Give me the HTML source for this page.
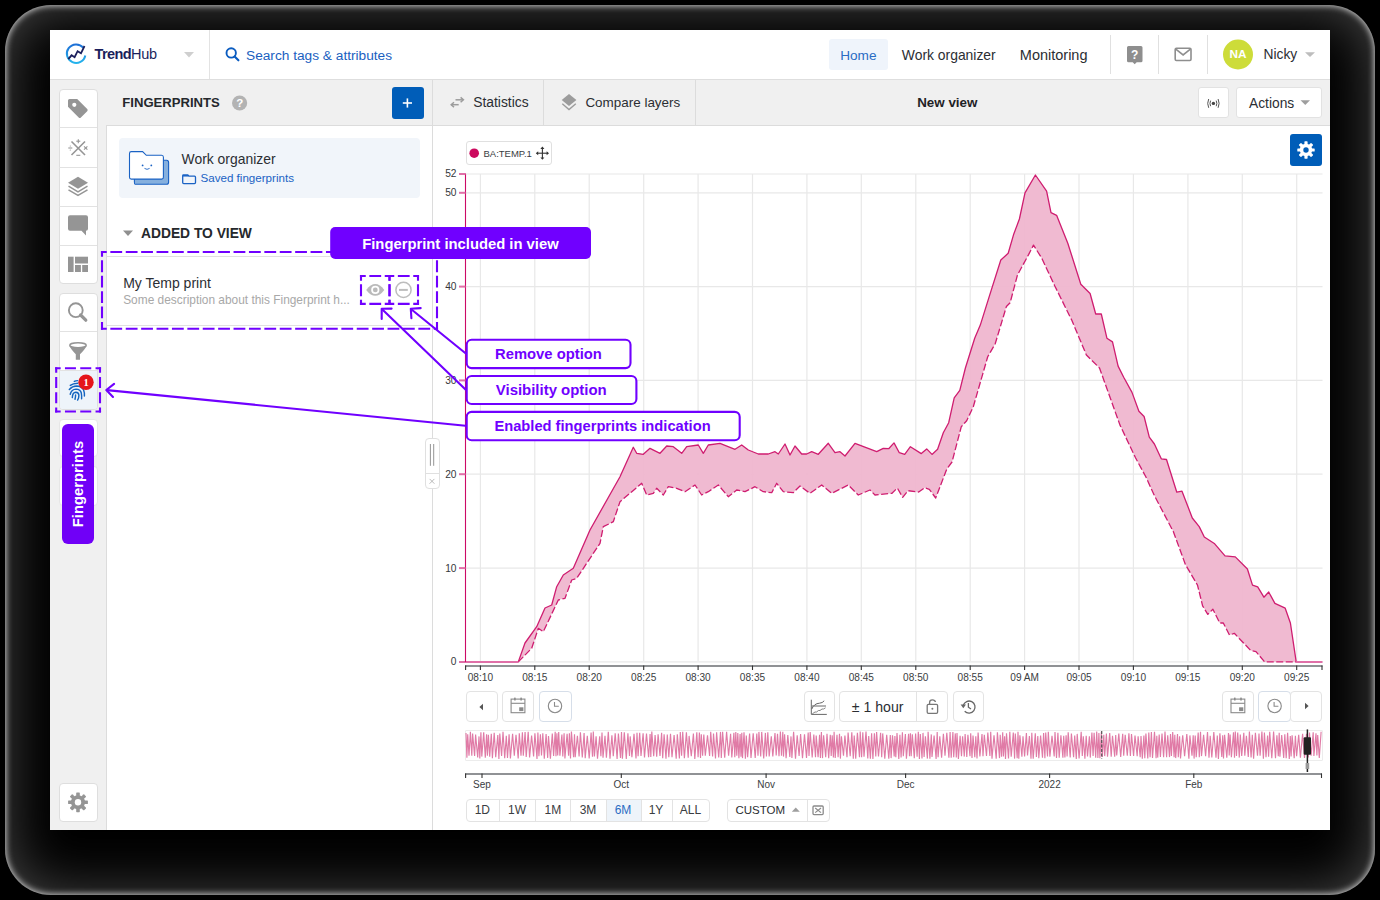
<!DOCTYPE html><html><head><meta charset="utf-8"><style>
*{margin:0;padding:0;box-sizing:border-box}
html,body{width:1380px;height:900px;overflow:hidden;background:#000}
body{position:relative;font-family:"Liberation Sans",sans-serif}
.t{position:absolute;white-space:nowrap}
.r{position:absolute}
svg.ov{position:absolute;left:0;top:0;width:1380px;height:900px;overflow:visible}
</style></head><body>
<div class="r" style="left:5px;top:5px;width:1370px;height:890px;border-radius:46px;background:#000;box-shadow:inset 0 0 6px 1px rgba(255,255,255,0.75),inset 0 0 60px 0 rgba(255,255,255,0.3)"></div>
<div class="r" style="left:50px;top:30px;width:1280px;height:800px;background:#fff"></div>
<div class="r" style="left:50px;top:79px;width:1280px;height:1px;background:#dedede"></div>
<div class="r" style="left:209px;top:30px;width:1px;height:49px;background:#e3e3e3"></div>
<svg class="ov" viewBox="0 0 1380 900">
<defs><linearGradient id="lg" x1="0" y1="0" x2="0" y2="1"><stop offset="0" stop-color="#1d6fd6"/><stop offset="1" stop-color="#25b4ec"/></linearGradient></defs>
<path d="M83.2 47.6 A9.3 9.3 0 1 0 85.3 55.5" fill="none" stroke="url(#lg)" stroke-width="2"/>
<polyline points="68.3,59.2 71.6,55.3 74.6,57.2 77.6,51.2 81,53.3 84.5,46" fill="none" stroke="#1b1f5c" stroke-width="1.8" stroke-linejoin="miter"/>
</svg>
<div class="t" style="left:94.50px;top:47.33px;font-size:14.5px;line-height:14.5px;color:#1b1f5c;font-weight:normal;"><span style="font-weight:bold;letter-spacing:-0.6px">Trend</span><span style="letter-spacing:-0.3px">Hub</span></div>
<svg class="ov" viewBox="0 0 1380 900"><path d="M184 52 L194 52 L189 57.5Z" fill="#cfcfcf"/></svg>
<svg class="ov" viewBox="0 0 1380 900"><circle cx="231.2" cy="52.9" r="4.7" fill="none" stroke="#0b5cc0" stroke-width="1.9"/><line x1="234.6" y1="56.4" x2="238.4" y2="60.3" stroke="#0b5cc0" stroke-width="2.1" stroke-linecap="round"/></svg>
<div class="t" style="left:246.00px;top:49.10px;font-size:13.7px;line-height:13.7px;color:#1a5fbf;font-weight:normal;">Search tags &amp; attributes</div>
<div class="r" style="left:829px;top:39px;width:59px;height:31px;background:#eff4fb;border-radius:3px"></div>
<div class="t" style="left:840.20px;top:48.99px;font-size:13.6px;line-height:13.6px;color:#2a6cc4;font-weight:normal;">Home</div>
<div class="t" style="left:901.80px;top:48.73px;font-size:13.9px;line-height:13.9px;color:#2b2e33;font-weight:normal;">Work organizer</div>
<div class="t" style="left:1019.80px;top:48.23px;font-size:14.5px;line-height:14.5px;color:#2b2e33;font-weight:normal;">Monitoring</div>
<div class="r" style="left:1110px;top:35px;width:1px;height:39px;background:#e0e0e0"></div>
<div class="r" style="left:1158px;top:35px;width:1px;height:39px;background:#e0e0e0"></div>
<div class="r" style="left:1207px;top:35px;width:1px;height:39px;background:#e0e0e0"></div>
<svg class="ov" viewBox="0 0 1380 900">
<path d="M1128.5 46 h12.5 a1.5 1.5 0 0 1 1.5 1.5 v13.3 a1.5 1.5 0 0 1 -1.5 1.5 h-4.3 l-2 2 l-2 -2 h-4.2 a1.5 1.5 0 0 1 -1.5 -1.5 v-13.3 a1.5 1.5 0 0 1 1.5 -1.5z" fill="#8e8e8e"/>
<text x="1134.7" y="59.3" font-family="Liberation Sans" font-weight="bold" font-size="12" fill="#fff" text-anchor="middle">?</text>
<rect x="1175.2" y="48.3" width="15.8" height="12.2" rx="1.2" fill="none" stroke="#8e8e8e" stroke-width="1.6"/>
<polyline points="1175.8,49.2 1183.1,55 1190.4,49.2" fill="none" stroke="#8e8e8e" stroke-width="1.6"/>
<circle cx="1238" cy="54.5" r="15" fill="#cddc39"/>
</svg>
<div class="t" style="left:1038.00px;width:400px;text-align:center;top:48.71px;font-size:11.8px;line-height:11.8px;color:#fff;font-weight:bold;">NA</div>
<div class="t" style="left:1263.50px;top:47.82px;font-size:13.8px;line-height:13.8px;color:#2b2e33;font-weight:normal;">Nicky</div>
<svg class="ov" viewBox="0 0 1380 900"><path d="M1305 52.3 L1315 52.3 L1310 57Z" fill="#bdbdbd"/></svg>
<div class="r" style="left:50px;top:80px;width:1280px;height:750px;background:#f0f0f0"></div>
<div class="r" style="left:106px;top:125px;width:1px;height:705px;background:#dcdcdc"></div>
<div class="r" style="left:107px;top:126px;width:325px;height:704px;background:#fff"></div>
<div class="r" style="left:107px;top:125px;width:325px;height:1px;background:#dcdcdc"></div>
<div class="r" style="left:432px;top:80px;width:1px;height:750px;background:#dcdcdc"></div>
<div class="r" style="left:433px;top:126px;width:897px;height:704px;background:#fff"></div>
<div class="r" style="left:433px;top:125px;width:897px;height:1px;background:#dcdcdc"></div>
<div class="r" style="left:58.5px;top:88.5px;width:39px;height:195px;background:#fff;border:1px solid #dedede;border-radius:4px"></div>
<div class="r" style="left:59px;top:127px;width:38px;height:1px;background:#e2e2e2"></div>
<div class="r" style="left:59px;top:166.5px;width:38px;height:1px;background:#e2e2e2"></div>
<div class="r" style="left:59px;top:205.5px;width:38px;height:1px;background:#e2e2e2"></div>
<div class="r" style="left:59px;top:244.5px;width:38px;height:1px;background:#e2e2e2"></div>
<div class="r" style="left:58.5px;top:292.5px;width:39px;height:117px;background:#fff;border:1px solid #dedede;border-radius:4px"></div>
<div class="r" style="left:59px;top:331px;width:38px;height:1px;background:#e2e2e2"></div>
<div class="r" style="left:59px;top:369.5px;width:38px;height:1px;background:#e2e2e2"></div>
<div class="r" style="left:59.5px;top:370.5px;width:37px;height:38px;background:#eef4fa;border-radius:0 0 3px 3px"></div>
<div class="r" style="left:58.5px;top:418.5px;width:39px;height:38px;background:#fff;border:1px solid #e6e6e6;border-radius:4px"></div>
<div class="r" style="left:58.5px;top:466px;width:39px;height:40px;background:#fff;border:1px solid #e6e6e6;border-radius:4px"></div>
<div class="r" style="left:58.5px;top:782.5px;width:39px;height:39px;background:#fff;border:1px solid #dedede;border-radius:4px"></div>
<svg class="ov" viewBox="0 0 1380 900">
<path d="M68 100.5 Q68 99 69.5 99 L77.2 99 L87.2 109 Q88.3 110.1 87.2 111.2 L80.9 117.5 Q79.8 118.6 78.7 117.5 L68 106.8Z" fill="#959595"/>
<circle cx="74.3" cy="104.8" r="2.1" fill="#fff"/>
<g stroke="#959595" stroke-width="1.6"><line x1="71.5" y1="141.5" x2="85" y2="155"/><line x1="85" y1="141.5" x2="71.5" y2="155"/></g>
<g stroke="#959595" stroke-width="1.1"><line x1="76.3" y1="141.2" x2="80.3" y2="141.2"/><line x1="78.3" y1="139.2" x2="78.3" y2="143.2"/>
<line x1="76.3" y1="155.3" x2="80.3" y2="155.3"/><line x1="68.3" y1="148" x2="72.3" y2="148"/><line x1="84" y1="146.3" x2="87.4" y2="149.7"/><line x1="87.4" y1="146.3" x2="84" y2="149.7"/></g>
<circle cx="70.3" cy="146" r="0.6" fill="#959595"/><circle cx="70.3" cy="150" r="0.6" fill="#959595"/>
<path d="M68 182.7 L78 176.7 L88 182.7 L78 188.7Z" fill="#959595"/>
<path d="M68.5 186.2 L78 191.8 L87.5 186.2" fill="none" stroke="#959595" stroke-width="1.5"/>
<path d="M68.5 189.8 L78 195.4 L87.5 189.8" fill="none" stroke="#959595" stroke-width="1.5"/>
<path d="M70 215.3 H86 Q88 215.3 88 217.3 V228.7 Q88 230.7 86 230.7 V235.5 L81.5 230.7 H70 Q68 230.7 68 228.7 V217.3 Q68 215.3 70 215.3Z" fill="#959595"/>
<rect x="68" y="256.7" width="5.6" height="15.3" fill="#959595"/>
<rect x="75" y="256.7" width="13" height="6.8" fill="#959595"/>
<rect x="75" y="265" width="5.9" height="7" fill="#959595"/>
<rect x="82.2" y="265" width="5.8" height="7" fill="#959595"/>
<circle cx="75.8" cy="310.2" r="6.9" fill="none" stroke="#959595" stroke-width="1.9"/>
<line x1="80.6" y1="315" x2="85.8" y2="320.2" stroke="#959595" stroke-width="3.2" stroke-linecap="round"/>
<ellipse cx="78" cy="345.3" rx="8.2" ry="2.5" fill="none" stroke="#959595" stroke-width="1.5"/>
<path d="M69.5 346 Q71 349.5 75.8 354.2 V359.7 H80 V354.2 Q85 349.5 86.5 346 Q78 349.8 69.5 346Z" fill="#959595"/>
<circle cx="78" cy="802.3" r="7.0" fill="#959595"/><rect x="76.20" y="792.40" width="3.60" height="4.40" rx="0.6" fill="#959595" transform="rotate(0.0 78 802.3)"/><rect x="76.20" y="792.40" width="3.60" height="4.40" rx="0.6" fill="#959595" transform="rotate(45.0 78 802.3)"/><rect x="76.20" y="792.40" width="3.60" height="4.40" rx="0.6" fill="#959595" transform="rotate(90.0 78 802.3)"/><rect x="76.20" y="792.40" width="3.60" height="4.40" rx="0.6" fill="#959595" transform="rotate(135.0 78 802.3)"/><rect x="76.20" y="792.40" width="3.60" height="4.40" rx="0.6" fill="#959595" transform="rotate(180.0 78 802.3)"/><rect x="76.20" y="792.40" width="3.60" height="4.40" rx="0.6" fill="#959595" transform="rotate(225.0 78 802.3)"/><rect x="76.20" y="792.40" width="3.60" height="4.40" rx="0.6" fill="#959595" transform="rotate(270.0 78 802.3)"/><rect x="76.20" y="792.40" width="3.60" height="4.40" rx="0.6" fill="#959595" transform="rotate(315.0 78 802.3)"/><circle cx="78" cy="802.3" r="3.2" fill="#fff"/>
</svg>
<svg class="ov" viewBox="0 0 1380 900"><g fill="none" stroke="#1565c0" stroke-width="1.45" stroke-linecap="round">
<path d="M74.3 381.4 Q75.8 380.6 77.6 380.6"/>
<path d="M70.3 385.4 Q73 383.3 77.8 383.2"/>
<path d="M69.3 389.4 Q72.5 386 76.5 386 Q81.5 386.2 83.6 390 Q84.6 392.5 84.4 396"/>
<path d="M70.2 394.3 Q71.5 389.2 76 389.1 Q80.5 389.3 81.3 393 Q81.8 396 81.6 398.7"/>
<path d="M72.3 397.6 Q72.5 392.3 75.8 392.2 Q78.8 392.4 78.9 395.2 Q78.9 398 77.6 400.1"/>
<path d="M75 399.3 Q75.6 397.3 75.6 395"/>
</g>
<circle cx="86" cy="382.2" r="7.7" fill="#e5151b"/>
<text x="86.1" y="385.9" font-family="Liberation Serif" font-weight="bold" font-size="10.5" fill="#fff" text-anchor="middle">1</text>
</svg>
<div class="r" style="left:62px;top:424px;width:32px;height:120px;background:#7000f7;border-radius:6px"></div>
<div class="t" style="left:78px;top:484px;width:0;height:0"><div style="position:absolute;left:-60px;top:-9px;width:120px;height:18px;line-height:18px;text-align:center;transform:rotate(-90deg);font-size:14.8px;font-weight:bold;color:#fff">Fingerprints</div></div>
<div class="t" style="left:122.30px;top:96.41px;font-size:13.1px;line-height:13.1px;color:#25282c;font-weight:bold;">FINGERPRINTS</div>
<svg class="ov" viewBox="0 0 1380 900">
<circle cx="239.6" cy="103" r="7.6" fill="#b3b3b3"/>
<text x="239.7" y="107.3" font-family="Liberation Sans" font-weight="bold" font-size="11.5" fill="#fff" text-anchor="middle">?</text>
</svg>
<div class="r" style="left:391.5px;top:86.5px;width:32px;height:32px;background:#005db8;border-radius:3px"></div>
<svg class="ov" viewBox="0 0 1380 900"><g stroke="#fff" stroke-width="1.6"><line x1="402.8" y1="103" x2="412" y2="103"/><line x1="407.4" y1="98.4" x2="407.4" y2="107.6"/></g></svg>
<div class="r" style="left:119px;top:138px;width:300.5px;height:60px;background:#f1f5fa;border-radius:4px"></div>
<svg class="ov" viewBox="0 0 1380 900">
<path d="M135 184.3 Q134.4 184.3 134.4 182 V161.5 Q134.4 160.2 136 160.2 H166.6 Q168.6 160.2 168.6 162.4 V182.3 Q168.6 184.3 166.6 184.3Z" fill="#86b0de" stroke="#1a62c4" stroke-width="1.1"/>
<path d="M131.3 151.6 H142.6 L146.3 155.3 H161.6 Q163.4 155.3 163.4 157.3 V177.3 Q163.4 179.1 161.6 179.1 H131.3 Q129.5 179.1 129.5 177.3 V153.4 Q129.5 151.6 131.3 151.6Z" fill="#fff" stroke="#1a62c4" stroke-width="1.1"/>
<circle cx="142.6" cy="165.4" r="0.9" fill="#1a62c4"/><circle cx="151.3" cy="165.4" r="0.9" fill="#1a62c4"/>
<path d="M144.5 168.4 Q147 170.3 149.6 168.4" fill="none" stroke="#1a62c4" stroke-width="0.9"/>
<path d="M183.4 175 H187.8 L189 176.2 H194.5 Q195.5 176.2 195.5 177.2 V182.6 Q195.5 183.6 194.5 183.6 H183.7 Q182.7 183.6 182.7 182.6 V175.7 Q182.7 175 183.4 175Z" fill="none" stroke="#1a62c4" stroke-width="1.3"/>
<line x1="183" y1="175.8" x2="188.5" y2="175.8" stroke="#1a62c4" stroke-width="1.5"/>
</svg>
<div class="t" style="left:181.60px;top:152.73px;font-size:13.9px;line-height:13.9px;color:#2b2e33;font-weight:normal;">Work organizer</div>
<div class="t" style="left:200.50px;top:172.08px;font-size:11.6px;line-height:11.6px;color:#1a62c4;font-weight:normal;">Saved fingerprints</div>
<svg class="ov" viewBox="0 0 1380 900"><path d="M123 230.5 L133 230.5 L128 236Z" fill="#8f8f8f"/></svg>
<div class="t" style="left:141.00px;top:226.72px;font-size:13.8px;line-height:13.8px;color:#25282c;font-weight:bold;">ADDED TO VIEW</div>
<div class="r" style="left:107px;top:256px;width:325px;height:1px;background:#e0e0e0"></div>
<div class="r" style="left:107px;top:325px;width:325px;height:1px;background:#e0e0e0"></div>
<div class="t" style="left:123.20px;top:275.65px;font-size:14px;line-height:14px;color:#2b2e33;font-weight:normal;">My Temp print</div>
<div class="t" style="left:123.20px;top:294.93px;font-size:11.9px;line-height:11.9px;color:#a8a8a8;font-weight:normal;">Some description about this Fingerprint h...</div>
<svg class="ov" viewBox="0 0 1380 900">
<path d="M366.2 289.9 Q375.3 278 384.3 289.9 Q375.3 301.8 366.2 289.9Z" fill="#bababa"/>
<circle cx="375.3" cy="289.9" r="4.1" fill="#fff"/><circle cx="375.3" cy="289.9" r="2.4" fill="#bababa"/>
<circle cx="403.5" cy="289.9" r="7.6" fill="none" stroke="#bdbdbd" stroke-width="1.5"/>
<line x1="399" y1="289.9" x2="407.8" y2="289.9" stroke="#bdbdbd" stroke-width="2"/>
</svg>
<div class="r" style="left:543px;top:80px;width:1px;height:45px;background:#dcdcdc"></div>
<div class="r" style="left:695px;top:80px;width:1px;height:45px;background:#dcdcdc"></div>
<svg class="ov" viewBox="0 0 1380 900">
<g fill="none" stroke="#9c9c9c" stroke-width="1.5">
<line x1="455.5" y1="99.8" x2="463" y2="99.8"/><path d="M460.6 97.4 L463.4 99.8 L460.6 102.2"/>
<line x1="451.2" y1="104.7" x2="458.7" y2="104.7"/><path d="M454 102.3 L451.2 104.7 L454 107.1"/>
</g>
<path d="M561.7 100.1 L569 94.1 L576.4 100.1 L569 106.1Z" fill="#9c9c9c"/>
<path d="M562.3 103.8 L569 109.5 L575.8 103.8" fill="none" stroke="#9c9c9c" stroke-width="1.4"/>
</svg>
<div class="t" style="left:473.20px;top:96.08px;font-size:13.85px;line-height:13.85px;color:#2b2e33;font-weight:normal;">Statistics</div>
<div class="t" style="left:585.40px;top:96.41px;font-size:13.45px;line-height:13.45px;color:#2b2e33;font-weight:normal;">Compare layers</div>
<div class="t" style="left:747.30px;width:400px;text-align:center;top:95.96px;font-size:13.4px;line-height:13.4px;color:#1f2226;font-weight:bold;">New view</div>
<div class="r" style="left:1198px;top:87px;width:31px;height:31px;background:#fff;border:1px solid #e2e2e2;border-radius:3px"></div>
<div class="r" style="left:1235.5px;top:87px;width:86px;height:31px;background:#fff;border:1px solid #e2e2e2;border-radius:3px"></div>
<div class="t" style="left:1249.00px;top:96.82px;font-size:13.8px;line-height:13.8px;color:#2b2e33;font-weight:normal;">Actions</div>
<svg class="ov" viewBox="0 0 1380 900">
<path d="M1300.5 100.3 L1310 100.3 L1305.25 104.9Z" fill="#9e9e9e"/>
<circle cx="1213.4" cy="103.4" r="1.7" fill="#444"/>
<g fill="none" stroke="#555" stroke-width="1">
<path d="M1210.6 100.6 Q1209.3 103.4 1210.6 106.2"/><path d="M1216.2 100.6 Q1217.5 103.4 1216.2 106.2"/>
<path d="M1208.7 99 Q1206.7 103.4 1208.7 107.8"/><path d="M1218.1 99 Q1220.1 103.4 1218.1 107.8"/>
</g>
</svg>
<div class="r" style="left:1290px;top:134px;width:32px;height:32px;background:#005db8;border-radius:3px"></div>
<svg class="ov" viewBox="0 0 1380 900"><circle cx="1306" cy="150" r="6.2" fill="#fff"/><rect x="1304.40" y="141.30" width="3.20" height="4.00" rx="0.6" fill="#fff" transform="rotate(0.0 1306 150)"/><rect x="1304.40" y="141.30" width="3.20" height="4.00" rx="0.6" fill="#fff" transform="rotate(45.0 1306 150)"/><rect x="1304.40" y="141.30" width="3.20" height="4.00" rx="0.6" fill="#fff" transform="rotate(90.0 1306 150)"/><rect x="1304.40" y="141.30" width="3.20" height="4.00" rx="0.6" fill="#fff" transform="rotate(135.0 1306 150)"/><rect x="1304.40" y="141.30" width="3.20" height="4.00" rx="0.6" fill="#fff" transform="rotate(180.0 1306 150)"/><rect x="1304.40" y="141.30" width="3.20" height="4.00" rx="0.6" fill="#fff" transform="rotate(225.0 1306 150)"/><rect x="1304.40" y="141.30" width="3.20" height="4.00" rx="0.6" fill="#fff" transform="rotate(270.0 1306 150)"/><rect x="1304.40" y="141.30" width="3.20" height="4.00" rx="0.6" fill="#fff" transform="rotate(315.0 1306 150)"/><circle cx="1306" cy="150" r="2.7" fill="#005db8"/></svg>
<svg class="ov" viewBox="0 0 1380 900"><line x1="465" y1="174.0" x2="1322.5" y2="174.0" stroke="#e8e8e8" stroke-width="1.2"/><line x1="465" y1="192.8" x2="1322.5" y2="192.8" stroke="#e8e8e8" stroke-width="1.2"/><line x1="465" y1="286.6" x2="1322.5" y2="286.6" stroke="#e8e8e8" stroke-width="1.2"/><line x1="465" y1="380.4" x2="1322.5" y2="380.4" stroke="#e8e8e8" stroke-width="1.2"/><line x1="465" y1="474.2" x2="1322.5" y2="474.2" stroke="#e8e8e8" stroke-width="1.2"/><line x1="465" y1="568.1" x2="1322.5" y2="568.1" stroke="#e8e8e8" stroke-width="1.2"/><line x1="465" y1="661.9" x2="1322.5" y2="661.9" stroke="#e8e8e8" stroke-width="1.2"/><line x1="480.4" y1="174" x2="480.4" y2="661" stroke="#e8e8e8" stroke-width="1.2"/><line x1="534.8" y1="174" x2="534.8" y2="661" stroke="#e8e8e8" stroke-width="1.2"/><line x1="589.2" y1="174" x2="589.2" y2="661" stroke="#e8e8e8" stroke-width="1.2"/><line x1="643.7" y1="174" x2="643.7" y2="661" stroke="#e8e8e8" stroke-width="1.2"/><line x1="698.1" y1="174" x2="698.1" y2="661" stroke="#e8e8e8" stroke-width="1.2"/><line x1="752.5" y1="174" x2="752.5" y2="661" stroke="#e8e8e8" stroke-width="1.2"/><line x1="806.9" y1="174" x2="806.9" y2="661" stroke="#e8e8e8" stroke-width="1.2"/><line x1="861.3" y1="174" x2="861.3" y2="661" stroke="#e8e8e8" stroke-width="1.2"/><line x1="915.8" y1="174" x2="915.8" y2="661" stroke="#e8e8e8" stroke-width="1.2"/><line x1="970.2" y1="174" x2="970.2" y2="661" stroke="#e8e8e8" stroke-width="1.2"/><line x1="1024.6" y1="174" x2="1024.6" y2="661" stroke="#e8e8e8" stroke-width="1.2"/><line x1="1079.0" y1="174" x2="1079.0" y2="661" stroke="#e8e8e8" stroke-width="1.2"/><line x1="1133.4" y1="174" x2="1133.4" y2="661" stroke="#e8e8e8" stroke-width="1.2"/><line x1="1187.9" y1="174" x2="1187.9" y2="661" stroke="#e8e8e8" stroke-width="1.2"/><line x1="1242.3" y1="174" x2="1242.3" y2="661" stroke="#e8e8e8" stroke-width="1.2"/><line x1="1296.7" y1="174" x2="1296.7" y2="661" stroke="#e8e8e8" stroke-width="1.2"/><path d="M465,661.9 L518.3,661.9 L525,643 L536.7,626.7 L545,608 L551.7,605 L556.7,586.7 L563.3,575 L573.3,568.3 L590,530 L620,476.7 L633.3,447.3 L636.7,453.3 L643.3,454.3 L650,448.3 L660,453.3 L666.7,446 L673.3,446.7 L681.7,453.3 L686.7,446.7 L698.3,445 L703.3,453.3 L708.3,445 L720,443.3 L735,449.3 L741.7,445 L748.3,450 L758.3,454 L768.3,454 L775,451.7 L778.3,454 L785,444 L790,455 L795,446 L801.7,454 L806.7,454 L811.7,451.7 L818.3,454.3 L828.3,443.3 L835,452.7 L840,451.7 L845,456 L855,443.3 L876.7,451.7 L883.3,448.3 L888.7,448.7 L894,442.9 L899.3,452.7 L904.7,454.4 L910.4,446.7 L921.3,453.6 L926.7,448.9 L932,454.4 L937.6,449.3 L943.3,432.7 L948.7,422.7 L954.2,397.8 L959.8,390.3 L965.4,368 L974.7,338.2 L980.3,325.1 L989.6,295.4 L1000.8,260 L1008.2,253.3 L1013.8,233.9 L1019.4,219 L1025,192.9 L1035.4,175 L1046.6,191.1 L1051,212.7 L1056.6,215.3 L1067.8,243.2 L1080.8,284.2 L1090.1,293.5 L1095.7,314 L1101.3,314 L1106.9,338.2 L1112.5,341.9 L1118.1,366.1 L1123.7,377.3 L1132,392.4 L1138.9,411.3 L1144.1,416.5 L1149.3,437.1 L1154.4,444 L1161.3,458.8 L1166.5,459.5 L1176.8,492.2 L1182,491.2 L1192.3,518 L1199.2,526.6 L1204.3,537 L1214.7,543.8 L1225,555.9 L1235.3,556.9 L1247.4,569 L1252.5,585.1 L1257.7,586.9 L1263.9,597.2 L1268.7,592 L1274.9,603.4 L1285.2,608.2 L1290.4,623 L1296.2,661.9 L1322,661.9 L1296.2,661.9 L1264.6,661.9 L1256,651.6 L1250.8,650.6 L1234.3,633.3 L1229.5,635.1 L1223.3,623 L1219.8,623 L1212.9,609.2 L1207.8,614.4 L1202.6,605.8 L1197.5,585.1 L1185.4,564.5 L1173.4,531.8 L1154.4,495.6 L1145.8,476.7 L1135.5,457.8 L1120,425.1 L1099.5,368 L1086.4,355 L1071.5,319.6 L1054.8,286 L1041.7,258.1 L1033.5,245.1 L1028.7,254.4 L1017.5,274.9 L1010.1,302.8 L1006.4,306.5 L995.2,343.8 L987.7,356.8 L973.3,406.7 L966.7,420.7 L961.3,426.7 L952,462 L946.7,469.3 L935.7,498 L929.3,489.3 L924.7,487.7 L918.7,492 L908,490.7 L902.7,497.3 L897.3,488 L892,493.3 L875,495 L870,490 L858.3,495 L848.3,485 L831.7,493.3 L821.7,485 L810,493.3 L800,486 L793.3,492.7 L783.3,491.7 L776.7,483.3 L771.7,492.7 L763.3,491.7 L755,486.7 L745,491.7 L736.7,490 L728.3,496.7 L718.3,485 L708.3,491.7 L701.7,495 L695,485 L685,491.7 L676.7,488.3 L668.3,486.7 L663.3,495 L656.7,488.3 L653.3,493.3 L646.7,495 L641.7,483.3 L620,501.7 L613.3,521.7 L603.3,526.7 L600,543.3 L576.7,578.3 L571.7,580 L565,598.3 L558.3,600 L543.3,631.7 L538.3,628.3 L531.7,648.3 L518.3,661.9Z" fill="#efb6cf" fill-opacity="0.95"/><polyline points="465,661.9 518.3,661.9 525,643 536.7,626.7 545,608 551.7,605 556.7,586.7 563.3,575 573.3,568.3 590,530 620,476.7 633.3,447.3 636.7,453.3 643.3,454.3 650,448.3 660,453.3 666.7,446 673.3,446.7 681.7,453.3 686.7,446.7 698.3,445 703.3,453.3 708.3,445 720,443.3 735,449.3 741.7,445 748.3,450 758.3,454 768.3,454 775,451.7 778.3,454 785,444 790,455 795,446 801.7,454 806.7,454 811.7,451.7 818.3,454.3 828.3,443.3 835,452.7 840,451.7 845,456 855,443.3 876.7,451.7 883.3,448.3 888.7,448.7 894,442.9 899.3,452.7 904.7,454.4 910.4,446.7 921.3,453.6 926.7,448.9 932,454.4 937.6,449.3 943.3,432.7 948.7,422.7 954.2,397.8 959.8,390.3 965.4,368 974.7,338.2 980.3,325.1 989.6,295.4 1000.8,260 1008.2,253.3 1013.8,233.9 1019.4,219 1025,192.9 1035.4,175 1046.6,191.1 1051,212.7 1056.6,215.3 1067.8,243.2 1080.8,284.2 1090.1,293.5 1095.7,314 1101.3,314 1106.9,338.2 1112.5,341.9 1118.1,366.1 1123.7,377.3 1132,392.4 1138.9,411.3 1144.1,416.5 1149.3,437.1 1154.4,444 1161.3,458.8 1166.5,459.5 1176.8,492.2 1182,491.2 1192.3,518 1199.2,526.6 1204.3,537 1214.7,543.8 1225,555.9 1235.3,556.9 1247.4,569 1252.5,585.1 1257.7,586.9 1263.9,597.2 1268.7,592 1274.9,603.4 1285.2,608.2 1290.4,623 1296.2,661.9 1322,661.9" fill="none" stroke="#cf1d70" stroke-width="1.3" stroke-linejoin="round"/><polyline points="518.3,661.9 531.7,648.3 538.3,628.3 543.3,631.7 558.3,600 565,598.3 571.7,580 576.7,578.3 600,543.3 603.3,526.7 613.3,521.7 620,501.7 641.7,483.3 646.7,495 653.3,493.3 656.7,488.3 663.3,495 668.3,486.7 676.7,488.3 685,491.7 695,485 701.7,495 708.3,491.7 718.3,485 728.3,496.7 736.7,490 745,491.7 755,486.7 763.3,491.7 771.7,492.7 776.7,483.3 783.3,491.7 793.3,492.7 800,486 810,493.3 821.7,485 831.7,493.3 848.3,485 858.3,495 870,490 875,495 892,493.3 897.3,488 902.7,497.3 908,490.7 918.7,492 924.7,487.7 929.3,489.3 935.7,498 946.7,469.3 952,462 961.3,426.7 966.7,420.7 973.3,406.7 987.7,356.8 995.2,343.8 1006.4,306.5 1010.1,302.8 1017.5,274.9 1028.7,254.4 1033.5,245.1 1041.7,258.1 1054.8,286 1071.5,319.6 1086.4,355 1099.5,368 1120,425.1 1135.5,457.8 1145.8,476.7 1154.4,495.6 1173.4,531.8 1185.4,564.5 1197.5,585.1 1202.6,605.8 1207.8,614.4 1212.9,609.2 1219.8,623 1223.3,623 1229.5,635.1 1234.3,633.3 1250.8,650.6 1256,651.6 1264.6,661.9 1296.2,661.9" fill="none" stroke="#cf1d70" stroke-width="1.3" stroke-dasharray="7 2.5" stroke-linejoin="round"/><path d="M459 661.9 H518.3 M1296.2 661.9 H1322.5" stroke="#e070a8" stroke-width="2"/><line x1="465.5" y1="173.5" x2="465.5" y2="662" stroke="#cc0a66" stroke-width="1.1"/><line x1="459" y1="174.0" x2="465.5" y2="174.0" stroke="#e070a8" stroke-width="2"/><line x1="459" y1="192.8" x2="465.5" y2="192.8" stroke="#e070a8" stroke-width="2"/><line x1="459" y1="286.6" x2="465.5" y2="286.6" stroke="#e070a8" stroke-width="2"/><line x1="459" y1="380.4" x2="465.5" y2="380.4" stroke="#e070a8" stroke-width="2"/><line x1="459" y1="474.2" x2="465.5" y2="474.2" stroke="#e070a8" stroke-width="2"/><line x1="459" y1="568.1" x2="465.5" y2="568.1" stroke="#e070a8" stroke-width="2"/><line x1="465" y1="666" x2="1322.5" y2="666" stroke="#6b6e72" stroke-width="1.6"/><line x1="465.6" y1="665.5" x2="465.6" y2="670" stroke="#333" stroke-width="1.1"/><line x1="480.4" y1="665.5" x2="480.4" y2="670" stroke="#333" stroke-width="1.1"/><line x1="534.8" y1="665.5" x2="534.8" y2="670" stroke="#333" stroke-width="1.1"/><line x1="589.2" y1="665.5" x2="589.2" y2="670" stroke="#333" stroke-width="1.1"/><line x1="643.7" y1="665.5" x2="643.7" y2="670" stroke="#333" stroke-width="1.1"/><line x1="698.1" y1="665.5" x2="698.1" y2="670" stroke="#333" stroke-width="1.1"/><line x1="752.5" y1="665.5" x2="752.5" y2="670" stroke="#333" stroke-width="1.1"/><line x1="806.9" y1="665.5" x2="806.9" y2="670" stroke="#333" stroke-width="1.1"/><line x1="861.3" y1="665.5" x2="861.3" y2="670" stroke="#333" stroke-width="1.1"/><line x1="915.8" y1="665.5" x2="915.8" y2="670" stroke="#333" stroke-width="1.1"/><line x1="970.2" y1="665.5" x2="970.2" y2="670" stroke="#333" stroke-width="1.1"/><line x1="1024.6" y1="665.5" x2="1024.6" y2="670" stroke="#333" stroke-width="1.1"/><line x1="1079.0" y1="665.5" x2="1079.0" y2="670" stroke="#333" stroke-width="1.1"/><line x1="1133.4" y1="665.5" x2="1133.4" y2="670" stroke="#333" stroke-width="1.1"/><line x1="1187.9" y1="665.5" x2="1187.9" y2="670" stroke="#333" stroke-width="1.1"/><line x1="1242.3" y1="665.5" x2="1242.3" y2="670" stroke="#333" stroke-width="1.1"/><line x1="1296.7" y1="665.5" x2="1296.7" y2="670" stroke="#333" stroke-width="1.1"/><line x1="1322.0" y1="665.5" x2="1322.0" y2="670" stroke="#333" stroke-width="1.1"/></svg>
<div class="t" style="left:56.50px;width:400px;text-align:right;top:169.45px;font-size:10.2px;line-height:10.2px;color:#34373b;font-weight:normal;">52</div>
<div class="t" style="left:56.50px;width:400px;text-align:right;top:188.22px;font-size:10.2px;line-height:10.2px;color:#34373b;font-weight:normal;">50</div>
<div class="t" style="left:56.50px;width:400px;text-align:right;top:282.05px;font-size:10.2px;line-height:10.2px;color:#34373b;font-weight:normal;">40</div>
<div class="t" style="left:56.50px;width:400px;text-align:right;top:375.88px;font-size:10.2px;line-height:10.2px;color:#34373b;font-weight:normal;">30</div>
<div class="t" style="left:56.50px;width:400px;text-align:right;top:469.71px;font-size:10.2px;line-height:10.2px;color:#34373b;font-weight:normal;">20</div>
<div class="t" style="left:56.50px;width:400px;text-align:right;top:563.54px;font-size:10.2px;line-height:10.2px;color:#34373b;font-weight:normal;">10</div>
<div class="t" style="left:56.50px;width:400px;text-align:right;top:657.37px;font-size:10.2px;line-height:10.2px;color:#34373b;font-weight:normal;">0</div>
<div class="t" style="left:280.40px;width:400px;text-align:center;top:672.65px;font-size:10.1px;line-height:10.1px;color:#3a3d42;font-weight:normal;">08:10</div>
<div class="t" style="left:334.82px;width:400px;text-align:center;top:672.65px;font-size:10.1px;line-height:10.1px;color:#3a3d42;font-weight:normal;">08:15</div>
<div class="t" style="left:389.24px;width:400px;text-align:center;top:672.65px;font-size:10.1px;line-height:10.1px;color:#3a3d42;font-weight:normal;">08:20</div>
<div class="t" style="left:443.66px;width:400px;text-align:center;top:672.65px;font-size:10.1px;line-height:10.1px;color:#3a3d42;font-weight:normal;">08:25</div>
<div class="t" style="left:498.08px;width:400px;text-align:center;top:672.65px;font-size:10.1px;line-height:10.1px;color:#3a3d42;font-weight:normal;">08:30</div>
<div class="t" style="left:552.50px;width:400px;text-align:center;top:672.65px;font-size:10.1px;line-height:10.1px;color:#3a3d42;font-weight:normal;">08:35</div>
<div class="t" style="left:606.92px;width:400px;text-align:center;top:672.65px;font-size:10.1px;line-height:10.1px;color:#3a3d42;font-weight:normal;">08:40</div>
<div class="t" style="left:661.34px;width:400px;text-align:center;top:672.65px;font-size:10.1px;line-height:10.1px;color:#3a3d42;font-weight:normal;">08:45</div>
<div class="t" style="left:715.76px;width:400px;text-align:center;top:672.65px;font-size:10.1px;line-height:10.1px;color:#3a3d42;font-weight:normal;">08:50</div>
<div class="t" style="left:770.18px;width:400px;text-align:center;top:672.65px;font-size:10.1px;line-height:10.1px;color:#3a3d42;font-weight:normal;">08:55</div>
<div class="t" style="left:824.60px;width:400px;text-align:center;top:672.65px;font-size:10.1px;line-height:10.1px;color:#3a3d42;font-weight:normal;">09 AM</div>
<div class="t" style="left:879.02px;width:400px;text-align:center;top:672.65px;font-size:10.1px;line-height:10.1px;color:#3a3d42;font-weight:normal;">09:05</div>
<div class="t" style="left:933.44px;width:400px;text-align:center;top:672.65px;font-size:10.1px;line-height:10.1px;color:#3a3d42;font-weight:normal;">09:10</div>
<div class="t" style="left:987.86px;width:400px;text-align:center;top:672.65px;font-size:10.1px;line-height:10.1px;color:#3a3d42;font-weight:normal;">09:15</div>
<div class="t" style="left:1042.28px;width:400px;text-align:center;top:672.65px;font-size:10.1px;line-height:10.1px;color:#3a3d42;font-weight:normal;">09:20</div>
<div class="t" style="left:1096.70px;width:400px;text-align:center;top:672.65px;font-size:10.1px;line-height:10.1px;color:#3a3d42;font-weight:normal;">09:25</div>
<div class="r" style="left:465.5px;top:141px;width:86px;height:24px;background:#fff;border:1px solid #e0e0e0;border-radius:3px"></div>
<svg class="ov" viewBox="0 0 1380 900">
<circle cx="474.2" cy="153.2" r="4.8" fill="#cc0a5e"/>
<g stroke="#333" stroke-width="1.1" fill="none"><line x1="542.4" y1="147.6" x2="542.4" y2="158.8"/><line x1="536.8" y1="153.2" x2="548" y2="153.2"/></g>
<g fill="#333"><path d="M542.4 146.6 L540.4 149 L544.4 149Z"/><path d="M542.4 159.8 L540.4 157.4 L544.4 157.4Z"/><path d="M535.8 153.2 L538.2 151.2 L538.2 155.2Z"/><path d="M549 153.2 L546.6 151.2 L546.6 155.2Z"/></g>
</svg>
<div class="t" style="left:483.50px;top:148.76px;font-size:9.5px;line-height:9.5px;color:#3a3d42;font-weight:normal;">BA:TEMP.1</div>
<div class="r" style="left:465.5px;top:690.5px;width:32px;height:31px;background:#fff;border:1px solid #e3e3e3;border-radius:4px"></div>
<div class="r" style="left:501.5px;top:690.5px;width:32.5px;height:31px;background:#fff;border:1px solid #e3e3e3;border-radius:4px"></div>
<div class="r" style="left:538.5px;top:690.5px;width:33px;height:31px;background:#fff;border:1px solid #d6dee9;border-radius:4px"></div>
<div class="r" style="left:803.5px;top:690.5px;width:31px;height:31px;background:#fff;border:1px solid #e3e3e3;border-radius:4px"></div>
<div class="r" style="left:839px;top:690.5px;width:108.5px;height:31px;background:#fff;border:1px solid #e3e3e3;border-radius:4px"></div>
<div class="r" style="left:916px;top:691px;width:1px;height:30px;background:#e3e3e3"></div>
<div class="r" style="left:952.5px;top:690.5px;width:31px;height:31px;background:#fff;border:1px solid #e3e3e3;border-radius:4px"></div>
<div class="r" style="left:1221.5px;top:690.5px;width:32px;height:31px;background:#fff;border:1px solid #e3e3e3;border-radius:4px"></div>
<div class="r" style="left:1258px;top:690.5px;width:32.5px;height:31px;background:#fff;border:1px solid #d6dee9;border-radius:4px"></div>
<div class="r" style="left:1290px;top:690.5px;width:32px;height:31px;background:#fff;border:1px solid #e3e3e3;border-radius:4px"></div>
<div class="t" style="left:851.80px;top:699.66px;font-size:14.1px;line-height:14.1px;color:#2b2e33;font-weight:normal;">± 1 hour</div>
<svg class="ov" viewBox="0 0 1380 900">
<path d="M479.4 707 L483 703.8 L483 710.2Z" fill="#555"/>
<rect x="511.1" y="699.1" width="13.8" height="13.6" fill="none" stroke="#8a8a8a" stroke-width="1.1"/>
<line x1="511.1" y1="703.3000000000001" x2="524.9" y2="703.3000000000001" stroke="#8a8a8a" stroke-width="1.1"/>
<rect x="514.1" y="697.5" width="1.6" height="3" rx="0.5" fill="#8a8a8a"/><rect x="520.3000000000001" y="697.5" width="1.6" height="3" rx="0.5" fill="#8a8a8a"/>
<rect x="519.2" y="707.3000000000001" width="4.2" height="3.8" fill="#8a8a8a"/>
<circle cx="555" cy="706" r="6.7" fill="none" stroke="#8a8a8a" stroke-width="1.1"/>
<path d="M554.5 702 V706.3 H558.8" fill="none" stroke="#8a8a8a" stroke-width="1.1"/>
<rect x="1231" y="699.1" width="13.8" height="13.6" fill="none" stroke="#8a8a8a" stroke-width="1.1"/>
<line x1="1231" y1="703.3000000000001" x2="1244.8" y2="703.3000000000001" stroke="#8a8a8a" stroke-width="1.1"/>
<rect x="1234" y="697.5" width="1.6" height="3" rx="0.5" fill="#8a8a8a"/><rect x="1240.2" y="697.5" width="1.6" height="3" rx="0.5" fill="#8a8a8a"/>
<rect x="1239.1" y="707.3000000000001" width="4.2" height="3.8" fill="#8a8a8a"/>
<circle cx="1274.6" cy="706" r="6.7" fill="none" stroke="#8a8a8a" stroke-width="1.1"/>
<path d="M1274.1 702 V706.3 H1278.3999999999999" fill="none" stroke="#8a8a8a" stroke-width="1.1"/>
<path d="M1308.6 706 L1305 702.8 L1305 709.2Z" fill="#555"/>
<g fill="none" stroke="#666" stroke-width="1">
<path d="M811.3 699.7 V714.4 H826.8"/>
<path d="M811.8 709 Q814 703.5 819.5 703.2 Q822.5 703 824.2 700.8"/>
<line x1="812" y1="706" x2="826" y2="706"/>
<path d="M812.3 713.8 L815 712 L816.5 712 L818.5 710.5 L820 710.5 L822 709 L823.5 709 L825.5 707.8" stroke-width="0.8"/>
</g>
<g fill="none" stroke="#777" stroke-width="1.3">
<rect x="927.2" y="704.4" width="10.4" height="8.9" rx="1.2"/>
<path d="M929.6 704.2 V702.4 Q929.6 699.8 932.4 699.8 Q935.1 699.8 935.4 702"/>
</g>
<circle cx="932.4" cy="708.8" r="1" fill="#777"/>
<g fill="none" stroke="#666" stroke-width="1.3">
<path d="M963.3 705.3 A6 6 0 1 1 964.7 711.2"/>
<path d="M968.4 703 V707.2 L971 709"/>
</g>
<path d="M960.6 704.6 L966 704.6 L963.3 708.2Z" fill="#666"/>
</svg>
<div class="r" style="left:465px;top:729.5px;width:857.5px;height:31px;background:#fff;border:1.5px solid #ececec;border-radius:1px"></div>
<svg class="ov" viewBox="0 0 1380 900"><polyline points="466.0,733.1 466.9,757.8 467.7,734.2 469.0,755.7 470.4,731.7 471.8,755.7 472.6,733.6 474.6,755.9 475.6,734.6 477.7,757.5 479.0,736.4 479.8,758.5 480.9,732.2 481.8,756.6 483.7,732.4 485.3,757.7 486.6,734.2 487.4,755.7 488.4,734.9 489.7,756.6 491.3,733.8 492.4,758.3 494.2,732.7 495.7,757.3 497.8,735.1 498.9,758.9 499.8,733.6 501.6,756.0 503.0,731.7 504.7,758.2 506.3,735.9 507.5,757.9 509.1,734.4 510.4,758.4 512.6,733.9 514.3,755.7 516.0,734.7 518.2,758.4 519.3,733.4 521.0,755.6 522.4,732.3 523.3,755.7 525.1,732.1 526.2,756.9 528.2,731.9 529.6,757.4 531.6,735.6 533.6,756.5 534.9,733.3 537.0,758.9 537.9,732.4 538.9,756.3 540.4,734.4 541.5,755.5 542.8,733.3 544.3,758.8 546.1,734.1 547.7,757.9 548.5,736.0 550.4,758.6 552.3,733.5 553.6,755.9 555.2,731.8 556.0,756.2 556.9,733.2 557.7,755.5 558.7,732.0 559.9,755.6 561.9,734.6 562.8,756.4 564.1,733.3 564.9,758.5 567.1,733.8 568.6,755.8 569.4,733.2 570.5,758.4 571.4,731.6 573.6,757.3 574.5,734.2 575.2,757.3 577.4,735.8 579.1,756.4 580.4,732.3 582.3,757.4 584.1,733.1 585.2,758.3 587.3,735.8 589.2,758.4 591.1,732.6 592.5,756.7 593.3,731.6 594.4,756.4 596.1,736.3 597.5,758.8 599.7,736.3 600.9,756.3 602.0,732.5 603.0,757.7 605.0,735.7 606.4,757.8 608.3,731.9 610.0,758.7 611.9,735.3 613.3,756.1 615.2,733.2 617.1,758.9 618.4,733.5 620.5,758.0 621.5,732.1 622.4,758.7 624.3,732.2 626.3,758.9 627.9,733.3 629.5,756.0 630.2,736.4 631.9,757.3 634.0,733.7 636.0,758.4 637.0,732.8 638.1,756.3 639.7,732.8 641.0,756.0 643.1,733.3 644.5,757.5 646.5,733.6 648.6,757.3 650.1,734.1 650.8,757.0 651.8,731.5 653.7,756.1 655.1,735.1 656.7,756.6 658.1,734.3 660.0,755.9 661.6,732.7 662.7,758.2 664.1,734.3 666.0,758.7 667.3,734.6 668.8,757.3 670.5,733.8 672.0,757.2 674.1,735.0 676.2,758.8 677.3,734.3 679.4,758.4 680.3,732.1 681.6,755.8 682.7,731.9 684.4,758.2 686.4,732.3 688.2,757.8 689.1,735.9 691.3,756.3 693.4,733.5 694.8,759.0 696.8,732.3 698.1,757.3 699.4,732.5 700.5,758.0 701.3,734.3 702.6,755.6 703.8,734.6 705.3,755.7 707.5,735.4 709.6,755.9 710.7,731.7 712.6,756.4 713.5,733.6 715.5,758.4 716.6,732.2 718.7,757.5 720.5,731.9 721.3,757.9 722.6,731.9 724.7,757.7 726.6,731.9 728.6,755.7 730.6,733.8 731.8,757.4 733.9,732.8 734.8,757.3 735.8,732.0 736.8,755.7 737.8,733.1 738.9,758.2 740.1,734.0 741.0,756.7 741.8,732.8 742.5,758.1 744.0,732.4 745.4,758.8 746.3,735.6 747.6,757.2 749.6,733.5 751.0,757.9 753.2,733.2 755.2,758.0 756.8,733.5 758.0,755.7 758.9,731.9 760.7,756.4 761.7,731.9 763.7,758.5 765.4,732.9 766.4,756.5 767.8,732.3 769.2,756.4 771.3,736.4 772.8,756.4 775.0,733.0 776.2,755.5 777.5,733.9 779.0,756.2 780.4,731.5 781.5,755.8 782.8,731.7 783.5,756.6 784.6,734.4 786.1,758.1 787.8,735.1 789.8,756.9 791.0,736.4 791.9,758.0 793.6,731.7 795.5,758.6 797.2,735.2 799.1,756.0 800.6,734.0 802.5,758.3 804.5,734.4 806.5,757.9 808.2,732.6 809.0,756.0 810.2,732.0 812.2,757.5 813.8,734.6 815.5,757.2 816.2,735.5 818.1,757.3 819.6,734.8 820.4,758.1 821.4,731.9 822.5,758.1 823.6,735.2 825.7,757.2 827.0,733.9 828.7,758.2 830.3,734.7 831.2,756.0 832.2,735.2 833.4,757.5 834.1,731.8 835.2,757.9 837.0,734.9 838.1,757.3 839.5,733.8 840.4,758.6 841.4,736.4 843.5,755.6 844.9,735.6 847.0,757.1 848.1,732.5 850.2,756.2 851.8,732.2 853.3,758.8 854.2,735.6 855.7,758.6 857.4,732.7 859.5,757.2 860.2,731.5 861.6,757.1 862.8,732.2 864.0,756.6 866.0,731.5 867.8,758.4 868.7,736.1 870.4,758.7 871.6,733.4 872.9,759.0 874.4,733.3 875.8,756.5 876.6,732.0 878.5,756.5 880.6,732.7 881.7,757.3 882.7,733.4 884.8,758.6 886.7,734.7 888.8,758.8 890.3,735.1 891.1,758.1 892.5,735.3 894.2,756.5 894.9,736.1 895.8,757.2 897.0,733.0 898.8,758.9 899.9,734.8 901.1,757.5 902.4,732.3 903.3,756.2 905.4,734.0 906.4,758.7 908.6,733.7 909.5,756.2 910.4,733.2 911.2,756.3 912.3,734.3 914.3,758.1 915.6,733.6 917.1,756.8 918.3,731.8 919.4,758.9 920.3,734.0 922.0,758.5 923.0,732.9 924.1,756.9 925.4,736.3 927.4,758.6 928.1,731.7 929.9,758.6 931.3,734.4 932.0,756.9 934.1,735.6 936.1,758.9 937.2,732.0 938.1,757.3 939.8,736.2 941.6,757.8 943.4,733.8 945.0,755.6 946.8,732.7 948.9,757.8 950.1,732.1 951.2,757.7 952.9,732.1 953.7,757.3 955.3,733.4 956.3,757.6 957.0,733.0 958.4,758.9 960.1,735.9 961.5,756.3 962.6,736.3 964.3,756.6 965.1,734.0 966.8,757.0 967.9,734.8 970.0,756.3 970.7,733.2 972.0,757.9 973.0,735.5 974.8,757.3 975.8,736.3 977.0,758.4 978.1,732.6 979.9,756.5 982.0,734.0 983.0,756.3 984.3,734.8 986.5,756.0 987.8,732.6 989.9,756.0 990.7,731.8 992.0,758.6 994.0,735.2 996.2,758.8 997.4,732.4 999.5,758.1 1000.2,734.8 1001.5,756.8 1002.7,732.3 1003.4,756.5 1004.6,736.3 1005.5,758.9 1006.5,733.3 1008.5,758.4 1009.8,731.7 1011.2,756.8 1013.3,732.5 1014.6,758.6 1015.3,733.6 1017.2,758.2 1018.0,731.7 1018.8,758.7 1019.9,735.2 1021.9,756.7 1023.0,736.3 1024.6,756.4 1026.4,733.1 1027.5,755.5 1029.4,736.1 1031.0,758.8 1031.8,732.7 1033.2,758.8 1035.3,733.4 1036.4,757.0 1037.8,736.1 1038.8,758.3 1040.6,735.6 1042.5,757.6 1043.6,733.1 1044.9,758.2 1045.7,732.5 1047.5,756.4 1048.3,731.7 1049.9,756.6 1052.0,735.9 1054.2,756.4 1055.0,732.0 1056.5,758.0 1057.9,732.7 1059.2,757.7 1060.9,735.2 1062.9,757.8 1063.7,735.7 1064.9,757.5 1066.1,735.2 1067.1,756.4 1068.2,732.3 1070.2,757.5 1071.4,733.5 1073.6,757.3 1074.7,735.5 1076.3,759.0 1077.2,733.9 1079.1,758.4 1081.2,731.7 1082.3,755.9 1083.3,736.4 1084.9,758.8 1086.2,735.8 1087.5,756.4 1089.4,736.2 1090.3,757.6 1091.9,732.6 1093.1,756.0 1094.1,732.8 1095.7,757.8 1096.7,731.6 1097.9,757.9 1098.9,733.1 1099.9,758.3 1101.4,731.8 1102.3,756.9 1103.8,734.7 1104.7,756.1 1106.4,733.5 1107.5,756.6 1109.7,733.1 1111.2,756.8 1112.5,735.8 1114.7,756.8 1115.7,735.1 1116.7,755.5 1118.8,733.6 1120.7,756.9 1122.7,733.8 1123.7,755.6 1125.2,734.7 1127.3,755.8 1128.9,733.4 1130.4,756.0 1131.5,734.1 1133.6,755.9 1135.0,735.5 1137.2,756.2 1138.1,736.2 1140.2,757.2 1141.0,736.1 1142.3,758.7 1143.9,735.6 1144.8,758.3 1145.9,733.5 1147.8,758.4 1148.8,732.6 1150.1,757.3 1151.4,732.1 1152.5,758.0 1154.5,731.7 1156.1,758.2 1156.8,735.7 1157.7,757.6 1159.2,734.6 1160.4,757.0 1162.0,733.6 1163.6,757.1 1165.0,731.6 1166.6,757.2 1167.7,735.3 1169.5,757.1 1170.5,733.9 1171.4,755.9 1172.7,732.0 1174.1,757.3 1174.8,734.7 1175.7,758.1 1177.5,734.1 1178.3,757.3 1179.6,736.3 1180.5,758.5 1182.7,735.2 1184.6,756.2 1186.8,734.0 1188.9,758.7 1189.9,735.4 1192.0,755.7 1193.2,735.3 1194.1,758.6 1195.2,735.6 1196.2,757.3 1198.2,732.5 1199.3,757.3 1200.5,731.7 1201.5,756.1 1203.6,734.9 1205.6,756.1 1207.5,732.1 1209.0,757.7 1210.2,735.9 1211.8,757.5 1213.8,732.0 1216.0,757.7 1217.3,735.5 1218.4,759.0 1219.9,733.3 1221.8,757.0 1222.7,735.2 1223.5,758.4 1224.6,734.7 1226.8,757.6 1228.5,733.1 1229.2,755.6 1230.1,734.6 1231.4,757.3 1233.5,732.2 1234.5,757.8 1235.3,731.5 1236.5,755.9 1237.7,732.6 1239.3,757.6 1240.3,734.6 1241.7,756.0 1243.8,732.7 1244.8,755.8 1246.4,735.9 1248.3,756.9 1249.4,731.6 1251.1,757.5 1252.3,734.7 1253.6,758.8 1255.4,732.7 1257.5,755.7 1259.0,733.5 1260.1,755.7 1261.9,731.6 1263.4,758.8 1264.4,732.5 1266.0,757.3 1267.6,735.6 1268.6,756.6 1269.7,731.7 1271.8,758.2 1273.6,731.5 1275.5,758.1 1276.9,735.2 1278.3,756.3 1279.2,732.7 1279.9,756.7 1281.7,735.0 1283.7,758.0 1284.8,734.3 1286.2,758.3 1287.6,732.8 1289.3,758.9 1290.3,735.9 1291.1,756.4 1292.1,735.2 1294.2,758.1 1295.4,735.9 1296.6,756.3 1298.7,734.7 1300.4,757.8 1302.6,733.8 1304.5,757.9 1306.5,733.7 1308.3,757.5 1309.5,732.6 1311.1,755.8 1313.2,732.2 1313.9,755.9 1316.0,733.2 1316.9,755.6 1317.7,735.0 1319.3,757.9 1321.1,731.8" fill="none" stroke="#db6497" stroke-width="1.15" stroke-opacity="0.85"/><line x1="1101.7" y1="731" x2="1101.7" y2="758.5" stroke="#555" stroke-width="1.2" stroke-dasharray="3 1.5"/><line x1="465" y1="774" x2="1322" y2="774" stroke="#6b6e72" stroke-width="1.6"/><line x1="465.6" y1="773.5" x2="465.6" y2="778" stroke="#333" stroke-width="1.1"/><line x1="482" y1="773.5" x2="482" y2="778" stroke="#333" stroke-width="1.1"/><line x1="621.3" y1="773.5" x2="621.3" y2="778" stroke="#333" stroke-width="1.1"/><line x1="766.1" y1="773.5" x2="766.1" y2="778" stroke="#333" stroke-width="1.1"/><line x1="905.6" y1="773.5" x2="905.6" y2="778" stroke="#333" stroke-width="1.1"/><line x1="1049.6" y1="773.5" x2="1049.6" y2="778" stroke="#333" stroke-width="1.1"/><line x1="1193.8" y1="773.5" x2="1193.8" y2="778" stroke="#333" stroke-width="1.1"/><line x1="1321.5" y1="773.5" x2="1321.5" y2="778" stroke="#333" stroke-width="1.1"/><line x1="1307.4" y1="729.4" x2="1307.4" y2="772" stroke="#222" stroke-width="1.5"/><rect x="1303.7" y="737.2" width="7.3" height="17.5" fill="#222" rx="1"/><rect x="1305.6" y="763" width="3.6" height="6" fill="#999"/></svg>
<div class="t" style="left:282.00px;width:400px;text-align:center;top:779.53px;font-size:10px;line-height:10px;color:#3a3d42;font-weight:normal;">Sep</div>
<div class="t" style="left:421.30px;width:400px;text-align:center;top:779.53px;font-size:10px;line-height:10px;color:#3a3d42;font-weight:normal;">Oct</div>
<div class="t" style="left:566.10px;width:400px;text-align:center;top:779.53px;font-size:10px;line-height:10px;color:#3a3d42;font-weight:normal;">Nov</div>
<div class="t" style="left:705.60px;width:400px;text-align:center;top:779.53px;font-size:10px;line-height:10px;color:#3a3d42;font-weight:normal;">Dec</div>
<div class="t" style="left:849.60px;width:400px;text-align:center;top:779.53px;font-size:10px;line-height:10px;color:#3a3d42;font-weight:normal;">2022</div>
<div class="t" style="left:993.80px;width:400px;text-align:center;top:779.53px;font-size:10px;line-height:10px;color:#3a3d42;font-weight:normal;">Feb</div>
<div class="r" style="left:465.5px;top:798.5px;width:244px;height:23.5px;background:#fff;border:1px solid #e3e3e3;border-radius:4px"></div>
<div class="r" style="left:605.5px;top:799.5px;width:35px;height:21.5px;background:#eef4fa"></div>
<div class="r" style="left:498.8px;top:799px;width:1px;height:22.5px;background:#e3e3e3"></div>
<div class="r" style="left:535.2px;top:799px;width:1px;height:22.5px;background:#e3e3e3"></div>
<div class="r" style="left:570.4px;top:799px;width:1px;height:22.5px;background:#e3e3e3"></div>
<div class="r" style="left:605.5px;top:799px;width:1px;height:22.5px;background:#e3e3e3"></div>
<div class="r" style="left:640.5px;top:799px;width:1px;height:22.5px;background:#e3e3e3"></div>
<div class="r" style="left:671.6px;top:799px;width:1px;height:22.5px;background:#e3e3e3"></div>
<div class="t" style="left:282.30px;width:400px;text-align:center;top:804.04px;font-size:12px;line-height:12px;color:#3a3d42;font-weight:normal;">1D</div>
<div class="t" style="left:317.00px;width:400px;text-align:center;top:804.04px;font-size:12px;line-height:12px;color:#3a3d42;font-weight:normal;">1W</div>
<div class="t" style="left:352.80px;width:400px;text-align:center;top:804.04px;font-size:12px;line-height:12px;color:#3a3d42;font-weight:normal;">1M</div>
<div class="t" style="left:388.00px;width:400px;text-align:center;top:804.04px;font-size:12px;line-height:12px;color:#3a3d42;font-weight:normal;">3M</div>
<div class="t" style="left:423.00px;width:400px;text-align:center;top:804.04px;font-size:12px;line-height:12px;color:#2a6cc4;font-weight:normal;">6M</div>
<div class="t" style="left:456.00px;width:400px;text-align:center;top:804.04px;font-size:12px;line-height:12px;color:#3a3d42;font-weight:normal;">1Y</div>
<div class="t" style="left:490.50px;width:400px;text-align:center;top:804.04px;font-size:12px;line-height:12px;color:#3a3d42;font-weight:normal;">ALL</div>
<div class="r" style="left:726.5px;top:798.5px;width:103.5px;height:23.5px;background:#fff;border:1px solid #e3e3e3;border-radius:4px"></div>
<div class="r" style="left:806.5px;top:799px;width:1px;height:22.5px;background:#e3e3e3"></div>
<div class="t" style="left:735.50px;top:805.27px;font-size:11.5px;line-height:11.5px;color:#2b2e33;font-weight:normal;">CUSTOM</div>
<svg class="ov" viewBox="0 0 1380 900">
<path d="M791.8 811.8 L799.8 811.8 L795.8 807.6Z" fill="#9e9e9e"/>
<rect x="813" y="806" width="10.2" height="8.6" rx="1" fill="none" stroke="#8a8a8a" stroke-width="1.3"/>
<g stroke="#8a8a8a" stroke-width="1.2"><line x1="815.2" y1="808" x2="821" y2="812.6"/><line x1="821" y1="808" x2="815.2" y2="812.6"/></g>
</svg>
<svg class="ov" viewBox="0 0 1380 900"><path d="M102 252 L437 252" fill="none" stroke="#7000ff" stroke-width="2.1" stroke-linecap="square" stroke-dasharray="9.70 5.70" stroke-dashoffset="6.00"/><path d="M102 252 L102 328.8" fill="none" stroke="#7000ff" stroke-width="2.1" stroke-linecap="square" stroke-dasharray="9.70 5.70" stroke-dashoffset="6.00"/><path d="M437 252 L437 328.8" fill="none" stroke="#7000ff" stroke-width="2.1" stroke-linecap="square" stroke-dasharray="9.70 5.70" stroke-dashoffset="6.00"/><path d="M102 328.8 L437 328.8" fill="none" stroke="#7000ff" stroke-width="2.1" stroke-linecap="square" stroke-dasharray="9.70 5.70" stroke-dashoffset="6.00"/><path d="M361 276 L389.5 276" fill="none" stroke="#7000ff" stroke-width="2.1" stroke-linecap="square" stroke-dasharray="9.70 5.70" stroke-dashoffset="6.00"/><path d="M361 276 L361 303.9" fill="none" stroke="#7000ff" stroke-width="2.1" stroke-linecap="square" stroke-dasharray="9.70 5.70" stroke-dashoffset="6.00"/><path d="M389.5 276 L389.5 303.9" fill="none" stroke="#7000ff" stroke-width="2.1" stroke-linecap="square" stroke-dasharray="9.70 5.70" stroke-dashoffset="6.00"/><path d="M361 303.9 L389.5 303.9" fill="none" stroke="#7000ff" stroke-width="2.1" stroke-linecap="square" stroke-dasharray="9.70 5.70" stroke-dashoffset="6.00"/><path d="M389.5 276 L418.0 276" fill="none" stroke="#7000ff" stroke-width="2.1" stroke-linecap="square" stroke-dasharray="9.70 5.70" stroke-dashoffset="6.00"/><path d="M389.5 276 L389.5 303.9" fill="none" stroke="#7000ff" stroke-width="2.1" stroke-linecap="square" stroke-dasharray="9.70 5.70" stroke-dashoffset="6.00"/><path d="M418.0 276 L418.0 303.9" fill="none" stroke="#7000ff" stroke-width="2.1" stroke-linecap="square" stroke-dasharray="9.70 5.70" stroke-dashoffset="6.00"/><path d="M389.5 303.9 L418.0 303.9" fill="none" stroke="#7000ff" stroke-width="2.1" stroke-linecap="square" stroke-dasharray="9.70 5.70" stroke-dashoffset="6.00"/><path d="M56.2 368.2 L100.0 368.2" fill="none" stroke="#7000ff" stroke-width="2.1" stroke-linecap="square" stroke-dasharray="8.90 6.40" stroke-dashoffset="5.50"/><path d="M56.2 368.2 L56.2 411.5" fill="none" stroke="#7000ff" stroke-width="2.1" stroke-linecap="square" stroke-dasharray="8.90 6.40" stroke-dashoffset="5.50"/><path d="M100.0 368.2 L100.0 411.5" fill="none" stroke="#7000ff" stroke-width="2.1" stroke-linecap="square" stroke-dasharray="8.90 6.40" stroke-dashoffset="5.50"/><path d="M56.2 411.5 L100.0 411.5" fill="none" stroke="#7000ff" stroke-width="2.1" stroke-linecap="square" stroke-dasharray="8.90 6.40" stroke-dashoffset="5.50"/><g fill="none" stroke="#7000ff" stroke-width="2.1" stroke-linecap="round" stroke-linejoin="round"><line x1="465.5" y1="353.3" x2="411.2" y2="309.2"/><path d="M420.7 308.1 L410.8 308.8 L411.4 318.3"/><line x1="465.5" y1="389.5" x2="382.1" y2="309.2"/><path d="M391.6 308.6 L381.7 308.8 L381.7 318.9"/><line x1="465.5" y1="425.7" x2="107" y2="390.1"/><path d="M114.1 383.9 L106.3 390 L113 397"/></g><rect x="330.2" y="227" width="260.8" height="31.9" rx="5" fill="#7000ff"/><rect x="466.7" y="339.7" width="163.8" height="28.400000000000034" rx="5" fill="#fff" stroke="#7000ff" stroke-width="2.1"/><rect x="466.7" y="376" width="169.7" height="28" rx="5" fill="#fff" stroke="#7000ff" stroke-width="2.1"/><rect x="466.7" y="411.9" width="273.00000000000006" height="28.400000000000034" rx="5" fill="#fff" stroke="#7000ff" stroke-width="2.1"/></svg>
<div class="t" style="left:362.20px;top:236.77px;font-size:14.8px;line-height:14.8px;color:#fff;font-weight:bold;">Fingerprint included in view</div>
<div class="t" style="left:495.00px;top:347.27px;font-size:14.8px;line-height:14.8px;color:#7000ff;font-weight:bold;">Remove option</div>
<div class="t" style="left:495.80px;top:383.04px;font-size:14.95px;line-height:14.95px;color:#7000ff;font-weight:bold;">Visibility option</div>
<div class="t" style="left:494.40px;top:419.36px;font-size:14.7px;line-height:14.7px;color:#7000ff;font-weight:bold;">Enabled fingerprints indication</div>
<div class="r" style="left:424.5px;top:437.5px;width:15px;height:51px;background:#fff;border:1px solid #e0e0e0;border-radius:4px"></div>
<div class="r" style="left:425px;top:473px;width:14px;height:1px;background:#e0e0e0"></div>
<svg class="ov" viewBox="0 0 1380 900">
<g stroke="#888" stroke-width="0.9"><line x1="430.4" y1="444" x2="430.4" y2="465.8"/><line x1="433.7" y1="444" x2="433.7" y2="465.8"/></g>
<g stroke="#aaa" stroke-width="0.8"><line x1="429.6" y1="478.9" x2="434.4" y2="483.7"/><line x1="434.4" y1="478.9" x2="429.6" y2="483.7"/></g>
</svg>
</body></html>
